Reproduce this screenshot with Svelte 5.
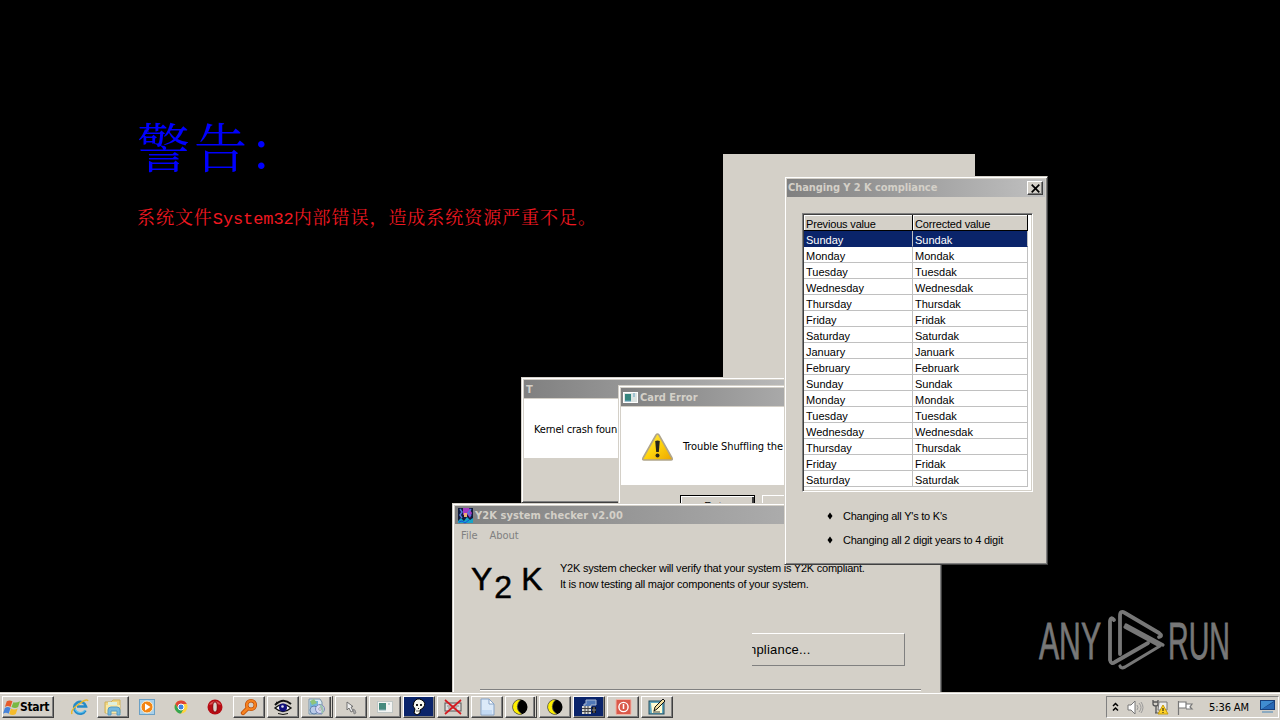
<script lang="ts">
  const days = [
    "Sunday", "Monday", "Tuesday", "Wednesday", "Thursday", "Friday", "Saturday",
    "January", "February",
    "Sunday", "Monday", "Tuesday", "Wednesday", "Thursday", "Friday", "Saturday",
  ];
  const rows = days.map((d) => ({ from: d, to: d.replace(/y$/, "k") }));

  const tasks = [
    { icon: "search" },
    { icon: "eye" },
    { icon: "installer", stacked: true },
    { icon: "cursor" },
    { icon: "window" },
    { icon: "skull", navy: true },
    { icon: "crossed" },
    { icon: "file" },
    { icon: "moon", stacked: true },
    { icon: "moon" },
    { icon: "calc", navy: true },
    { icon: "power" },
    { icon: "note" },
  ];
</script>

{#snippet appIcon(name: string)}
  <svg class="icon" width="20" height="18" viewBox="0 0 20 18">
    {#if name === "search"}
      <circle cx="12" cy="7" r="4.3" fill="none" stroke="#bd4b05" stroke-width="3.6" />
      <path d="M8.5 10.5 4 15" stroke="#bd4b05" stroke-width="4.4" stroke-linecap="round" />
      <circle cx="12" cy="7" r="4.3" fill="none" stroke="#f58220" stroke-width="2.2" />
      <path d="M8.5 10.5 4 15" stroke="#f58220" stroke-width="2.8" stroke-linecap="round" />
    {:else if name === "eye"}
      <path d="M2 7Q10-1 18 6" fill="none" stroke="#111" stroke-width="2" />
      <path d="M2 10Q10 3 18 10Q10 17 2 10Z" fill="#fff" stroke="#111" stroke-width="1.4" />
      <circle cx="10" cy="9.5" r="4" fill="#10107c" />
      <circle cx="9.5" cy="8.5" r="1.3" fill="#dde" />
      <path d="M5 15.5q5 2 10 0M3 4l2 1" fill="none" stroke="#111" />
    {:else if name === "installer"}
      <path d="M3 1h11l2 3v12H3z" fill="#d9ebf5" stroke="#7994aa" />
      <path d="M4 3h8v6H4z" fill="#72b5dd" />
      <path d="M4 3l4-2 3 4-5 2z" fill="#8fc479" />
      <circle cx="8" cy="12" r="4" fill="#b9cbe8" stroke="#6382ab" />
      <circle cx="14" cy="11" r="4.5" fill="#d8d9f5" stroke="#7d87bb" />
      <path d="M14 7q4 3 2 8" fill="none" stroke="#9bc6ad" stroke-width="2" />
      <circle cx="14" cy="11" r="1.3" fill="#fff" stroke="#777" stroke-width=".6" />
    {:else if name === "cursor"}
      <path d="M6 4v8l2-2 2 4 2-1-2-4 2-.5z" fill="#eee" stroke="#666" stroke-width=".9" />
      <path d="M12 11l2 1 1 3-2 1z" fill="#aaa" stroke="#777" stroke-width=".7" />
    {:else if name === "window"}
      <rect x="2.5" y="3.5" width="15" height="11" fill="#f3f4f2" stroke="#bfc6c4" />
      <rect x="4" y="5" width="7" height="7" fill="#458a7e" />
      <path d="M4 12h7M13 6h2" stroke="#8fb1ba" />
    {:else if name === "skull"}
      <path d="M5 4Q8-1 13 2Q18 5 14 10l-3 2v3l-3 2-3-2 1-4-2-3z" fill="#f8f8f0" stroke="#000" />
      <path d="M7 6h2v2H7zM11 6h2v2h-2z" fill="#222" />
      <path d="M9 10h1v1H9z" fill="#111" />
      <path d="M7 13h3" stroke="#666" />
    {:else if name === "crossed"}
      <rect x="2" y="5" width="16" height="8" fill="#ddd" stroke="#555" />
      <path d="M4 8h12M5 10h9" stroke="#888" />
      <path d="M2 2l16 14M18 2 2 16" stroke="#d51a20" stroke-width="1.7" />
    {:else if name === "file"}
      <path d="M4 1h8l5 5v11H4z" fill="#dceaf9" stroke="#86a3c8" />
      <path d="M12 1v5h5z" fill="#fff" stroke="#86a3c8" />
      <path d="M5 12h10v4H5z" fill="#c3daf4" />
    {:else if name === "moon"}
      <circle cx="10" cy="9" r="7.5" fill="#000" />
      <path d="M11 1.500A7.500 7.500 0 1 0 12 16.200Q7 13 7.300 8.500 7.600 4 11 1.500z" fill="#fff000" stroke="#555" stroke-width=".7" />
    {:else if name === "calc"}
      <path d="M7 2h10v5h-5v2H5V6h2z" fill="#5078b8" stroke="#a9b8d0" />
      <rect x="3" y="8" width="9" height="8" fill="#d8d8d4" />
      <path d="M3 10.5h9M3 13.500h9M6 8v8M9 8v8" stroke="#444" />
      <path d="M13 9h4v6h-4z" fill="#151515" />
      <path d="M13 12h4M15 9v6" stroke="#888" />
    {:else if name === "power"}
      <rect x="3" y="1.5" width="15" height="15" rx="1" fill="#da594a" stroke="#f1b1a4" />
      <circle cx="10.5" cy="9" r="4.6" fill="none" stroke="#fff" stroke-width="1.4" />
      <path d="M10.5 6v5" stroke="#fff" stroke-width="1.5" />
    {:else if name === "note"}
      <rect x="2" y="3" width="15" height="13" fill="#62a9c1" stroke="#244e5f" />
      <path d="M4 5h9l2 2v8H5z" fill="#fffbd1" />
      <path d="M7 13l1-4 8-8 2 2-8 8z" fill="#f1df9e" stroke="#111" />
      <path d="M6 14h7" stroke="#444" />
    {/if}
  </svg>
{/snippet}

<div class="desktop">
  <div class="warning">
    <h1>警告<span>：</span></h1>
    <p>系统文件<span>System32</span>内部错误，造成系统资源严重不足。</p>
  </div>

  <svg class="watermark" width="196" height="66" viewBox="0 0 196 66">
    <g class="brand">
      <text x="2" y="51" textLength="62" lengthAdjust="spacingAndGlyphs">ANY</text>
      <text x="131" y="51" textLength="62" lengthAdjust="spacingAndGlyphs">RUN</text>
    </g>
    <g fill="none" stroke="#777" stroke-width="3.8" stroke-linecap="round" stroke-linejoin="round">
      <path d="M83 46V8q0-6 5-3l34 20q4 3 0 4" />
      <path d="M77 12q-3-4-4 1v39q1 5 5 2l33-19" />
      <path d="M88 19l35 19-35 21q-4 2-5-1M89 17l37 20" stroke-width="3.2" />
    </g>
  </svg>

  <div class="blank"></div>

  <div class="window kernel">
    <div class="titlebar"><span>T</span></div>
    <div class="message"><span>Kernel crash foun</span></div>
  </div>

  <div class="window card">
    <div class="titlebar">
      <svg width="15" height="13" viewBox="0 0 15 13">
        <path d="M0 1h15v11H0z" fill="#fff" />
        <path d="M1 2h13v9H1z" fill="#dce4e2" />
        <path d="M2 3h6v7H2z" fill="#35857e" />
        <path d="M11 2v4M2 10h6" stroke="#66a3c4" />
      </svg>
      <span>Card Error</span>
    </div>
    <div class="message">
      <svg width="33" height="30" viewBox="0 0 33 30">
        <defs>
          <linearGradient id="amber" x1="0" y1="0" x2="1" y2="1">
            <stop offset="0" stop-color="#ffed5c" />
            <stop offset=".5" stop-color="#ffd30c" />
            <stop offset="1" stop-color="#eba500" />
          </linearGradient>
        </defs>
        <path d="M15 3q1.500-2 3 0l13 23q1 2-1 2H3q-2 0-1-2z" fill="url(#amber)" stroke="#b0a58a" stroke-width="1.6" />
        <path d="M14.200 9q2.300-1 4.600 0l-1 11h-2.600z" fill="#27251c" />
        <circle cx="16.500" cy="23.500" r="2" fill="#27251c" />
      </svg>
      <span>Trouble Shuffling the</span>
    </div>
    <div class="actions">
      <div class="button default">Retry</div>
      <div class="button"></div>
    </div>
  </div>

  <div class="window checker">
    <div class="titlebar">
      <svg width="17" height="17" viewBox="0 0 17 17">
        <path d="M1 1h15v15H1z" fill="#111c3c" />
        <path d="M6 1h6l3 5-2 5-3-4-4 1z" fill="#a33ac4" />
        <path d="M7 6h3v4H7z" fill="#efb174" />
        <path d="M3 2l2 3-2 3 2 3M14 2l-3 4 3 3" stroke="#5677dd" fill="none" stroke-width="1.5" />
        <path d="M1 14l3-3 3 3 3-4 3 3 3-2v5H1z" fill="#16a5c7" />
        <path d="M2 15l3-1 3 2 4-3" stroke="#174ce1" fill="none" />
      </svg>
      <span>Y2K system checker v2.00</span>
    </div>
    <div class="menu"><span>File</span><span>About</span></div>
    <div class="intro">
      <div class="logo"><span>Y</span><span class="low">2</span><span>K</span></div>
      <div class="intro-text">
        <div>Y2K system checker will verify that your system is Y2K compliant.</div>
        <div class="line2">It is now testing all major components of your system.</div>
      </div>
    </div>
    <div class="status"><span>npliance...</span></div>
    <div class="rule"></div>
  </div>

  <div class="window changes">
    <div class="titlebar">
      <span>Changing Y 2 K compliance</span>
      <div class="close">
        <svg width="9" height="9" viewBox="0 0 9 9"><path d="M.7.7l7.600 7.600M8.300.7.7 8.300" stroke="#000" stroke-width="1.700" /></svg>
      </div>
    </div>
    <div class="grid">
      <div class="row head"><div>Previous value</div><div>Corrected value</div></div>
      {#each rows as row, i}
        <div class="row" class:selected={i === 0}>
          <div>{row.from}</div>
          <div>{row.to}</div>
        </div>
      {/each}
    </div>
    <ul>
      <li>
        <svg width="6" height="8" viewBox="0 0 6 8"><path d="M3 .5l2.500 3.500L3 7.500.5 4z" /></svg>
        <span>Changing all Y's to K's</span>
      </li>
      <li>
        <svg width="6" height="8" viewBox="0 0 6 8"><path d="M3 .5l2.500 3.500L3 7.500.5 4z" /></svg>
        <span>Changing all 2 digit years to 4 digit</span>
      </li>
    </ul>
  </div>

  <div class="taskbar">
    <div class="start">
      <svg width="17" height="17" viewBox="0 0 18 17">
        <path d="M4 2q3-2 6 0L8 8Q5 6 2 8z" fill="#e65c2b" />
        <path d="M11 3q3 1 7-1l-2 6q-3 2-7 0z" fill="#79b943" />
        <path d="M2 9q3-2 6 0l-2 6q-3-2-6 0z" fill="#4683d9" />
        <path d="M8.500 9.500q3 2 7 0l-2 6q-3 2-7 0z" fill="#f5bb2b" />
      </svg>
      <span>Start</span>
    </div>

    <div class="pinned">
      <svg width="18" height="18" viewBox="0 0 18 18">
        <path d="M14.500 12.500A6 6 0 1 1 15 8.500H6" fill="none" stroke="#248bc9" stroke-width="2.600" />
        <path d="M14.300 12.200A6 6 0 0 1 4 11" fill="none" stroke="#5dc1ed" stroke-width="1.200" />
        <path d="M1 16Q-1 12 8 6Q16 0 17 3" fill="none" stroke="#e9b92c" stroke-width="1.500" />
      </svg>
    </div>
    <div class="task first">
      <svg width="18" height="17" viewBox="0 0 18 17">
        <path d="M1 3h6l2-2h7v13H1z" fill="#f3d681" stroke="#ceb15d" />
        <path d="M4 3h9v7H4z" fill="#dff0dd" />
        <path d="M2 6h14v8H2z" fill="#f9e8a5" />
        <path d="M4 16v-5q0-3 3-3h6q3 0 3 3v5h-3v-4H7v4z" fill="#76b9dd" stroke="#549bc3" />
      </svg>
    </div>
    <div class="pinned">
      <svg width="16" height="16" viewBox="0 0 16 16">
        <rect x=".5" y=".5" width="15" height="15" fill="#a8d0ea" stroke="#6aa0c5" />
        <circle cx="8" cy="8" r="6" fill="#f38513" stroke="#fff0d1" />
        <path d="M6 4.500 11.500 8 6 11.500z" fill="#fff" />
      </svg>
    </div>
    <div class="pinned">
      <svg width="14" height="14" viewBox="0 0 14 14">
        <circle cx="7" cy="7" r="6.500" fill="#ffd33e" />
        <path d="M1.300 4A6.500 6.500 0 0 1 12.800 4H7L4.500 9z" fill="#de4435" />
        <path d="M1.300 4A6.500 6.500 0 0 0 7 13.500L9.500 9H4.500z" fill="#35a552" />
        <circle cx="7" cy="7" r="3" fill="#3d83df" stroke="#fff" />
      </svg>
    </div>
    <div class="pinned">
      <svg width="16" height="16" viewBox="0 0 16 16">
        <circle cx="8" cy="8" r="7.500" fill="#b70c14" />
        <path d="M2 6a6.500 6 0 0 1 12 0q-6-2-12 0z" fill="#dc5053" />
        <ellipse cx="8" cy="8" rx="2.300" ry="5.200" fill="#d9d3cc" stroke="#860208" />
      </svg>
    </div>

    <div class="tasks">
      {#each tasks as task}
        <div class="task" class:stacked={task.stacked} class:navy={task.navy}>
          {@render appIcon(task.icon)}
        </div>
      {/each}
    </div>

    <div class="tray">
      <svg width="7" height="11" viewBox="0 0 7 11"><path d="M1 4l2.500-2.500L6 4M1 8.500l2.500-2.500L6 8.500" fill="none" stroke="#000" stroke-width="1.500" /></svg>
      <svg width="17" height="15" viewBox="0 0 17 15">
        <path d="M1 5h3l4-4v13l-4-4H1z" fill="#fff" stroke="#777" />
        <path d="M10 5q2 2.500 0 5M12 3q4 4.500 0 9M14 2q4 5.500 0 11" fill="none" stroke="#999" />
      </svg>
      <svg width="17" height="16" viewBox="0 0 17 16">
        <path d="M1 1v4q0 2 3 2v7M6 1v4q0 2-2 2M1 3h5" fill="none" stroke="#555" stroke-width="1.300" />
        <path d="M7 3h8v8H6z" fill="#eee" stroke="#777" />
        <path d="M3 14h4" stroke="#555" />
        <path d="M11 6l5 9H6z" fill="#ffd326" stroke="#c69b0a" />
        <path d="M11 9v3M11 13v1" stroke="#111" />
      </svg>
      <svg width="17" height="15" viewBox="0 0 17 15">
        <path d="M1.500 1v14M2 2h7v6H2M9 4h6l-2 3 2 2H9" fill="#fff" stroke="#777" stroke-width="1.200" />
      </svg>
      <time>5:36 AM</time>
      <svg width="15" height="14" viewBox="0 0 15 14">
        <rect width="15" height="10" fill="#183f7b" />
        <path d="M1 1h13L2 9H1z" fill="#408cd0" />
        <path d="M2 9 14 2v7z" fill="#2768b5" />
        <path d="M2 12h11" stroke="#8caac0" stroke-width="2" />
      </svg>
    </div>
  </div>
</div>

<style>
  :global(body) {
    background: #000;
    overflow: hidden;
  }
  .desktop {
    position: relative;
    width: 1280px;
    height: 720px;
    overflow: hidden;
    background: #000;
    color: #000;
    font: 11px/16px "Liberation Sans", Arial, sans-serif;
  }
  .desktop * {
    box-sizing: border-box;
  }
  svg {
    display: block;
    flex: none;
  }
  .warning {
    position: absolute;
    left: 137px;
    top: 115px;
    white-space: nowrap;
  }
  h1 {
    display: flex;
    height: 60px;
    margin: 0;
    color: #00f;
    font: 400 53px/60px "Noto Serif CJK SC", "Noto Sans CJK SC", serif;
    letter-spacing: 4px;
  }
  h1 span {
    margin-left: -2px;
    padding-top: 3px;
  }
  p {
    margin: 31px 0 0;
    color: #f01820;
    font: 400 18px/20px "Noto Serif CJK SC", "Noto Sans CJK SC", serif;
    letter-spacing: 0.95px;
  }
  p span {
    font-family: "Liberation Mono", monospace;
    font-size: 17px;
    letter-spacing: -0.1px;
  }
  .watermark {
    position: absolute;
    left: 1037px;
    top: 608px;
  }
  .brand {
    fill: #777;
    stroke: #777;
    stroke-width: 0.8px;
    font: 52px "Liberation Sans", sans-serif;
  }
  .blank {
    position: absolute;
    left: 723px;
    top: 154px;
    width: 252px;
    height: 400px;
    background: #d4d0c8;
  }
  .window {
    position: absolute;
    display: flex;
    flex-direction: column;
    padding: 1px;
    background: #d4d0c8;
    border: 1px solid;
    border-color: #d4d0c8 #404040 #404040 #d4d0c8;
    box-shadow: inset 1px 1px #fff, inset -1px -1px #808080;
    white-space: nowrap;
  }
  .titlebar {
    flex: none;
    display: flex;
    align-items: center;
    height: 18px;
    margin: 1px;
    background: linear-gradient(90deg, #808080, #c0c0c0);
    color: #d4d0c8;
    font: bold 11px/18px "DejaVu Sans Condensed", "DejaVu Sans", sans-serif;
    font-stretch: condensed;
  }
  .titlebar span {
    padding-top: 1px;
  }
  .kernel {
    left: 521px;
    top: 377px;
    width: 300px;
    height: 126px;
  }
  .kernel .titlebar {
    padding-left: 2px;
  }
  .message {
    flex: none;
    display: flex;
    align-items: center;
    background: #fff;
    margin: 0 1px;
    font: 11px/14px "DejaVu Sans Condensed", "DejaVu Sans", sans-serif;
    font-stretch: condensed;
    letter-spacing: -0.1px;
  }
  .message span {
    padding-top: 2px;
  }
  .kernel .message {
    height: 59px;
    padding-left: 10px;
    letter-spacing: -0.2px;
  }
  .card {
    left: 618px;
    top: 385px;
    width: 260px;
    height: 150px;
  }
  .card .titlebar {
    padding-left: 2px;
    gap: 2px;
  }
  .card .message {
    height: 78px;
    padding-left: 20px;
    gap: 9px;
  }
  .card .message svg {
    margin-top: 2px;
  }
  .actions {
    display: flex;
    gap: 7px;
    padding: 10px 0 0 60px;
  }
  .button {
    width: 75px;
    height: 23px;
    border: 1px solid;
    border-color: #fff #404040 #404040 #fff;
    text-align: center;
    line-height: 21px;
  }
  .default {
    border: 1px solid #000;
    box-shadow: inset 1px 1px #fff, inset -2px -1px #404040;
  }
  .checker {
    left: 452px;
    top: 503px;
    width: 490px;
    height: 240px;
  }
  .checker .titlebar {
    padding-left: 2px;
    gap: 1px;
    letter-spacing: 0.07px;
  }
  .checker .titlebar span {
    padding-top: 2px;
  }
  .menu {
    display: flex;
    gap: 12px;
    padding: 4px 0 0 7px;
    height: 18px;
    color: #808080;
    font: 11px/14px "DejaVu Sans Condensed", "DejaVu Sans", sans-serif;
    font-stretch: condensed;
  }
  .intro {
    display: flex;
    height: 90px;
    padding: 17px 0 0 17px;
  }
  .logo {
    display: flex;
    width: 89px;
    padding-top: 1px;
    font-size: 32px;
    line-height: 36px;
    -webkit-text-stroke: 0.5px #000;
  }
  .logo .low {
    width: 27px;
    margin-left: 2px;
    padding-top: 8px;
  }
  .intro-text {
    letter-spacing: -0.23px;
  }
  .status {
    width: 153px;
    height: 33px;
    margin-left: 298px;
    border: solid;
    border-width: 1px 1px 1px 0;
    border-color: #fff #808080 #808080;
    overflow: hidden;
    font-size: 13px;
    line-height: 31px;
    letter-spacing: 0.2px;
  }
  .status span {
    margin-left: -3px;
  }
  .rule {
    width: 441px;
    height: 2px;
    margin: 23px 0 0 26px;
    border-top: 1px solid #808080;
    border-bottom: 1px solid #fff;
  }
  .changes {
    left: 784px;
    top: 176px;
    width: 264px;
    height: 389px;
  }
  .changes .titlebar {
    justify-content: space-between;
    padding: 0 2px 0 1px;
    letter-spacing: -0.08px;
  }
  .changes .titlebar span {
    padding-top: 0;
  }
  .close {
    display: flex;
    align-items: center;
    justify-content: center;
    width: 16px;
    height: 14px;
    background: #d4d0c8;
    border: 1px solid;
    border-color: #fff #404040 #404040 #fff;
    box-shadow: inset -1px -1px #808080;
  }
  .grid {
    width: 231px;
    height: 279px;
    margin: 15px 0 0 16px;
    border: 1px solid;
    border-color: #808080 #fff #fff #808080;
    background: #fff;
    box-shadow: inset 1px 1px #404040, inset -1px -1px #d4d0c8;
    padding: 1px;
  }
  .row {
    display: grid;
    grid-template-columns: 109px 115px;
    height: 16px;
    line-height: 18px;
  }
  .row div {
    height: 16px;
    padding-left: 2px;
    border-right: 1px solid #c0c0c0;
    border-bottom: 1px solid #c0c0c0;
  }
  .row.head div {
    background: #d4d0c8;
    border-color: #000;
    box-shadow: inset 1px 1px #fff;
    letter-spacing: -0.17px;
  }
  .row.selected div {
    background: #0a246a;
    border-bottom-color: #0a246a;
    color: #fff;
  }
  ul {
    display: flex;
    flex-direction: column;
    gap: 8px;
    margin: 16px 0 0 41px;
    padding: 0;
    list-style: none;
    letter-spacing: -0.22px;
  }
  li {
    display: flex;
    align-items: center;
    gap: 10px;
  }
  .taskbar {
    position: absolute;
    left: 0;
    right: 0;
    top: 692px;
    height: 28px;
    display: flex;
    align-items: center;
    padding-top: 2px;
    background: #d4d0c8;
    box-shadow: inset 0 1px #d4d0c8, inset 0 2px #fff;
  }
  .start,
  .task {
    flex: none;
    display: flex;
    align-items: center;
    justify-content: center;
    height: 22px;
    border: 1px solid;
    border-color: #fff #404040 #404040 #fff;
    box-shadow: inset -1px -1px #808080;
  }
  .start {
    justify-content: flex-start;
    width: 52px;
    margin: 0 9px 0 2px;
    font: bold 12px/18px "DejaVu Sans Condensed", "DejaVu Sans", sans-serif;
    font-stretch: condensed;
    letter-spacing: -0.35px;
  }
  .pinned {
    flex: none;
    display: flex;
    justify-content: center;
    width: 34px;
  }
  .task {
    width: 32px;
  }
  .first {
    margin-right: 1px;
  }
  .tasks {
    display: flex;
    gap: 2px;
    margin-left: 1px;
  }
  .stacked {
    border-right: 3px double #404040;
    box-shadow: inset -1px -1px #808080;
  }
  .navy {
    background: #0a246a;
  }
  .tray {
    display: flex;
    align-items: center;
    gap: 8px;
    width: 173px;
    height: 22px;
    margin-left: auto;
    margin-right: 1px;
    padding-left: 5px;
    border: 1px solid;
    border-color: #808080 #fff #fff #808080;
    font: 11px/14px "DejaVu Sans Condensed", "DejaVu Sans", sans-serif;
    font-stretch: condensed;
  }
  time {
    width: 43px;
    margin: 1px 0 0 7px;
    white-space: nowrap;
    letter-spacing: -0.1px;
  }
</style>
